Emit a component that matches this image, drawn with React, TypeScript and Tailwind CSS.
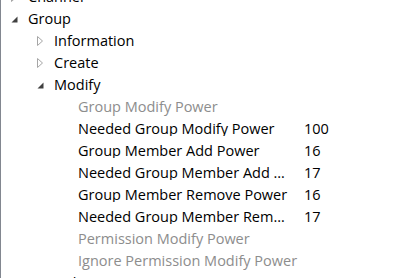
import React from 'react';

type Row = {
  label: string;
  level: number;
  arrow?: 'open' | 'closed';
  value?: string;
  muted?: boolean;
};

const rows: Row[] = [
  { label: 'Channel', level: 0, arrow: 'closed' },
  { label: 'Group', level: 0, arrow: 'open' },
  { label: 'Information', level: 1, arrow: 'closed' },
  { label: 'Create', level: 1, arrow: 'closed' },
  { label: 'Modify', level: 1, arrow: 'open' },
  { label: 'Group Modify Power', level: 2, muted: true },
  { label: 'Needed Group Modify Power', level: 2, value: '100' },
  { label: 'Group Member Add Power', level: 2, value: '16' },
  { label: 'Needed Group Member Add Power', level: 2, value: '17' },
  { label: 'Group Member Remove Power', level: 2, value: '16' },
  { label: 'Needed Group Member Remove Power', level: 2, value: '17' },
  { label: 'Permission Modify Power', level: 2, muted: true },
  { label: 'Ignore Permission Modify Power', level: 2, muted: true },
  { label: 'Delete', level: 1, arrow: 'closed' },
];

function Arrow({ kind }: { kind: 'open' | 'closed' }) {
  if (kind === 'open') {
    return (
      <svg width="9" height="9" viewBox="0 0 9 9">
        <polygon points="7.5,1.5 7.5,7.5 1.5,7.5" fill="#404040" />
      </svg>
    );
  }
  return (
    <svg width="9" height="10" viewBox="0 0 9 10">
      <polygon points="1.5,0.5 6.5,5 1.5,9.5" fill="none" stroke="#a6a6a6" strokeWidth="1" />
    </svg>
  );
}

export default function App() {
  return (
    <div
      className="h-[278px] w-[404px] overflow-hidden border-l border-[#828790] bg-white"
      style={{ fontFamily: '"Open Sans", "Noto Sans", sans-serif' }}
    >
      <div className="-mt-[14px]">
        {rows.map((row) => (
          <div key={row.label} className="flex h-[22px] items-center text-[14.5px] leading-none">
            {/* indent per level */}
            <div
              className={
                row.level === 0 ? 'w-[9px] shrink-0' : row.level === 1 ? 'w-[35px] shrink-0' : 'w-[59px] shrink-0'
              }
            />
            <div className="flex w-[18px] shrink-0 items-center">{row.arrow && <Arrow kind={row.arrow} />}</div>
            {row.level === 2 ? (
              row.muted ? (
                <span className="whitespace-nowrap text-[#8d8d8d]">{row.label}</span>
              ) : (
                <>
                  <span className="w-[226px] shrink-0 truncate pr-[12px] text-black">{row.label}</span>
                  <span className="text-black">{row.value}</span>
                </>
              )
            ) : (
              <span className="text-black">{row.label}</span>
            )}
          </div>
        ))}
      </div>
    </div>
  );
}
